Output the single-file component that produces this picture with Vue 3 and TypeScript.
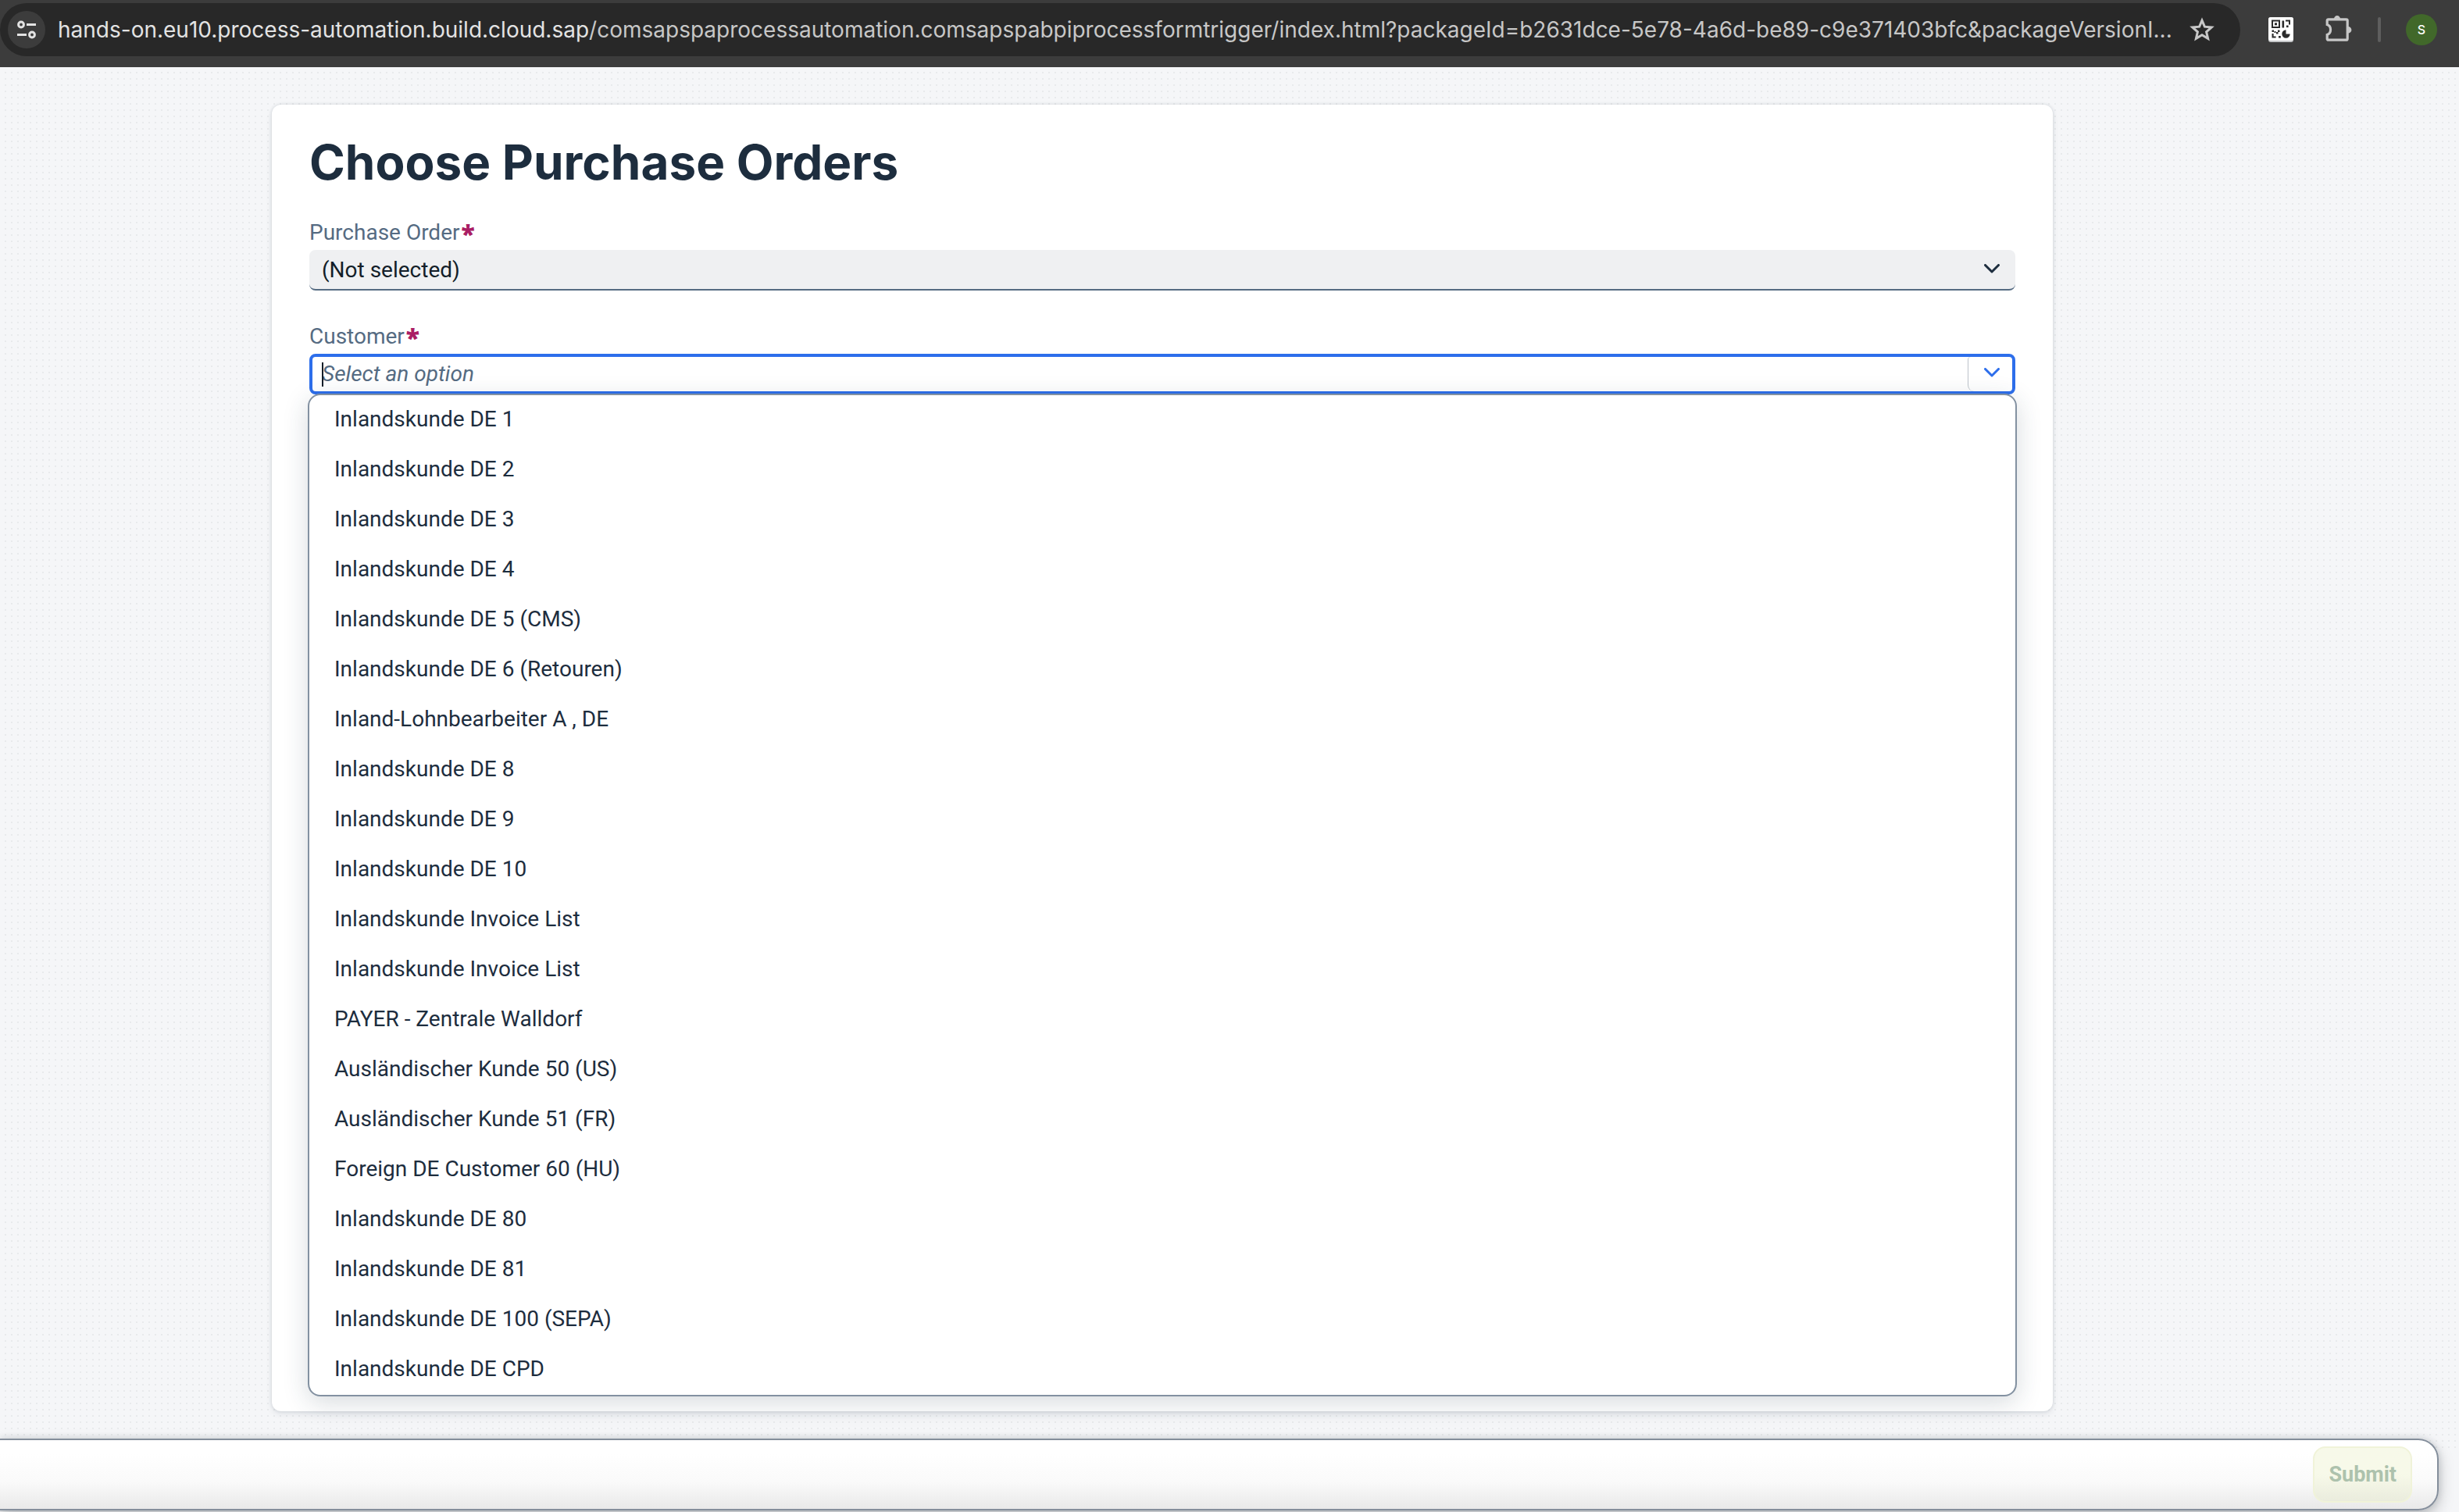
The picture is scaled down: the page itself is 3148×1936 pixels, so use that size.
<script setup lang="ts">
import { ref } from 'vue'

const host = 'hands-on.eu10.process-automation.build.cloud.sap'
const path =
  '/comsapspaprocessautomation.comsapspabpiprocessformtrigger/index.html?packageId=b2631dce-5e78-4a6d-be89-c9e371403bfc&packageVersionI...'

const customers: string[] = [
  'Inlandskunde DE 1',
  'Inlandskunde DE 2',
  'Inlandskunde DE 3',
  'Inlandskunde DE 4',
  'Inlandskunde DE 5 (CMS)',
  'Inlandskunde DE 6 (Retouren)',
  'Inland-Lohnbearbeiter A , DE',
  'Inlandskunde DE 8',
  'Inlandskunde DE 9',
  'Inlandskunde DE 10',
  'Inlandskunde Invoice List',
  'Inlandskunde Invoice List',
  'PAYER - Zentrale Walldorf',
  'Ausländischer Kunde 50 (US)',
  'Ausländischer Kunde 51 (FR)',
  'Foreign DE Customer 60 (HU)',
  'Inlandskunde DE 80',
  'Inlandskunde DE 81',
  'Inlandskunde DE 100 (SEPA)',
  'Inlandskunde DE CPD',
]

const order = ref('')
const customer = ref('')
</script>

<template>
  <div class="page">
    <header class="toolbar">
      <div class="omnibox">
        <button class="site-info" type="button" aria-label="View site information">
          <svg width="24" height="24" viewBox="0 0 24 24" fill="none" stroke="#e3e3e3" stroke-width="3">
            <circle cx="5" cy="5.5" r="3.4" />
            <path d="M12 5.5H24M0 18.5H12" />
            <circle cx="19" cy="18.5" r="3.4" />
          </svg>
        </button>
        <div class="url"><span class="host">{{ host }}</span>{{ path }}</div>
        <button class="icon-btn star" type="button" aria-label="Bookmark this tab">
          <svg width="34" height="32" viewBox="0 0 34 32" fill="none" stroke="#c7c7c7" stroke-width="3">
            <path d="M17 4.2L20.4 12.2L29.2 13L22.6 18.8L24.6 27.4L17 22.8L9.4 27.4L11.4 18.8L4.8 13L13.6 12.2Z" />
          </svg>
        </button>
      </div>
      <div class="extensions">
        <button class="icon-btn" type="button" aria-label="QR code extension">
          <svg width="32" height="32" viewBox="0 0 32 32">
            <rect width="32" height="32" rx="3" fill="#c4c6c8" />
            <rect width="32" height="30" rx="3" fill="#fff" />
            <g fill="#2b2b2b">
              <path fill-rule="evenodd" d="M4 3.5H15V14H4ZM6 5.5V12H13V5.5Z" />
              <rect x="8" y="7.3" width="3" height="3" />
              <rect x="17.5" y="4.5" width="2.6" height="9" />
              <path d="M22 3.5H28V9.5H26V5.5H22Z" />
              <rect x="23" y="10.5" width="2.6" height="2.6" />
              <rect x="4.5" y="16.5" width="2.5" height="2.5" />
              <rect x="10" y="19" width="2.5" height="2.5" />
              <rect x="12" y="16.5" width="2.5" height="2.5" />
              <rect x="7.5" y="18" width="2" height="2" />
              <path d="M4.5 21H6.6V24.6H9.6V26.6H4.5Z" />
              <rect x="13" y="24" width="2.8" height="2.6" />
              <path d="M22.5 16.3V21.5H27.7A5.2 5.2 0 1 1 22.5 16.3Z" />
            </g>
          </svg>
        </button>
        <button class="icon-btn" type="button" aria-label="Extensions">
          <svg width="36" height="36" viewBox="0 0 36 36">
            <path
              d="M3.2 6.3A1.5 1.5 0 0 1 4.7 4.8H27.7A1.5 1.5 0 0 1 29.2 6.3V29.7A1.5 1.5 0 0 1 27.7 31.2H4.7A1.5 1.5 0 0 1 3.2 29.7V24.4C9 22.5 9 13.5 3.2 11.6Z"
              fill="none" stroke="#c7c7c7" stroke-width="3.2"
            />
            <path d="M11.8 4.5A4.2 4.4 0 0 1 20.2 4.5ZM30 14A4.4 4.3 0 0 1 30 22.6Z" fill="#c7c7c7" />
          </svg>
        </button>
        <span class="separator"></span>
        <button class="avatar" type="button" aria-label="Profile">S</button>
      </div>
    </header>

    <main class="canvas">
      <form id="order-form" class="card" @submit.prevent>
        <h1>Choose Purchase Orders</h1>

        <div class="field">
          <label for="order">Purchase Order<span class="required">*</span></label>
          <div class="control">
            <select id="order" v-model="order">
              <option value="">(Not selected)</option>
            </select>
            <svg class="chevron" width="20" height="12" viewBox="0 0 20 12">
              <path d="M1.5 1.5L10 10L18.5 1.5" />
            </svg>
          </div>
        </div>

        <div class="field">
          <label for="customer">Customer<span class="required">*</span></label>
          <div class="combobox">
            <input
              id="customer" v-model="customer" type="text" role="combobox" aria-expanded="true"
              aria-controls="customer-list" placeholder="Select an option"
            />
            <span class="caret"></span>
            <button class="arrow" type="button" aria-label="Show options">
              <svg width="20" height="12" viewBox="0 0 20 12">
                <path d="M1.5 1.5L10 10L18.5 1.5" />
              </svg>
            </button>
            <ul id="customer-list" class="popover" role="listbox">
              <li v-for="(name, i) in customers" :key="i" role="option" @click="customer = name">{{ name }}</li>
            </ul>
          </div>
        </div>
      </form>
    </main>

    <footer class="actions">
      <div class="bar">
        <button class="submit" type="submit" form="order-form" disabled>Submit</button>
      </div>
    </footer>
  </div>
</template>

<style>
body {
  background: #f5f6f8;
}
</style>

<style scoped>
* {
  box-sizing: border-box;
}

.page {
  display: flex;
  flex-direction: column;
  min-height: 100vh;
  overflow: hidden;
  font-family: Roboto, sans-serif;
  font-size: 28px;
  color: #1d2d3e;
}

button {
  padding: 0;
  border: 0;
  background: none;
  font-family: inherit;
}

svg {
  display: block;
}

/* Browser toolbar */
.toolbar {
  display: flex;
  align-items: flex-start;
  gap: 36px;
  height: 86px;
  padding: 4px 28px 0 0;
  background: #3c3c3c;
  font-family: Inter, sans-serif;
}

.omnibox {
  display: flex;
  flex: 1;
  align-items: center;
  min-width: 0;
  height: 68px;
  padding: 0 32px 0 10px;
  border-radius: 34px;
  background: #282828;
}

.site-info {
  display: grid;
  flex: none;
  place-items: center;
  width: 48px;
  height: 48px;
  margin-right: 16px;
  border-radius: 50%;
  background: #3c3c3c;
}

.url {
  flex: 1;
  overflow: hidden;
  color: #c7c7c7;
  line-height: 40px;
  white-space: nowrap;
}

.host {
  color: #e3e3e3;
}

.star {
  margin-left: 16px;
}

.extensions {
  display: flex;
  align-items: center;
  gap: 32px;
  height: 68px;
}

.extensions .icon-btn + .icon-btn {
  margin-left: 8px;
}

.separator {
  width: 4px;
  height: 32px;
  border-radius: 2px;
  background: #5e5e5e;
}

.avatar {
  width: 40px;
  height: 40px;
  border-radius: 50%;
  background: #41682a;
  color: #fff;
  font-size: 16px;
  font-weight: 500;
  line-height: 40px;
}

/* Form canvas */
.canvas {
  display: flex;
  flex: 1;
  padding: 48px 520px 47px 348px;
  background: conic-gradient(from 270deg at 2px 2px, #e8eaec 90deg, transparent 0) 6px 6px / 8px 8px;
}

.card {
  flex: 1;
  padding: 38px 48px;
  border-radius: 12px;
  background: #fff;
  box-shadow: 0 0 4px rgba(34, 53, 72, 0.16), 0 4px 8px rgba(34, 53, 72, 0.08);
}

h1 {
  margin: 0 0 36px;
  font-family: Inter, sans-serif;
  font-size: 62px;
  font-weight: 700;
  line-height: 72px;
}

.field {
  margin-bottom: 41px;
}

label {
  display: block;
  height: 36px;
  margin-bottom: 4px;
  color: #556b82;
  line-height: 36px;
}

.required {
  margin-left: 2px;
  color: #aa1d64;
  font-family: "Open Sans", sans-serif;
  font-size: 32px;
  font-weight: 800;
  line-height: 0;
  vertical-align: -4px;
}

.control,
.combobox {
  position: relative;
  height: 52px;
}

select,
input {
  width: 100%;
  height: 100%;
  margin: 0;
  padding: 0 16px;
  border: 0;
  outline: 0;
  border-radius: 8px;
  appearance: none;
  background: #eff0f2;
  color: #131e29;
  font: inherit;
}

select {
  border-bottom: 2px solid #556b82;
}

.chevron {
  position: absolute;
  top: 18px;
  right: 20px;
  pointer-events: none;
}

.chevron path,
.arrow path {
  fill: none;
  stroke: #1d2d3e;
  stroke-width: 3;
  stroke-linecap: round;
  stroke-linejoin: round;
}

.combobox {
  display: flex;
  border: 4px solid #2d6eeb;
  border-radius: 8px;
  background: #fff;
}

.combobox input {
  flex: 1;
  min-width: 0;
  padding: 0 12px 2px;
  background: none;
}

.combobox input::placeholder {
  color: #556b82;
  font-style: italic;
  opacity: 1;
}

.caret {
  position: absolute;
  top: 7px;
  left: 12px;
  width: 2px;
  height: 31px;
  background: #131e29;
}

.arrow {
  display: grid;
  flex: none;
  place-items: center;
  width: 57px;
  padding-bottom: 4px;
  padding-left: 4px;
  border-left: 1px solid #bcc3ca;
  border-radius: 4px 4px 4px 8px;
}

.arrow path {
  stroke: #2d6eeb;
}

.popover {
  position: absolute;
  z-index: 1;
  top: 47px;
  right: -6px;
  left: -6px;
  margin: 0;
  padding: 0 0 4px;
  border: 2px solid #8391a1;
  border-radius: 16px;
  background: #fff;
  box-shadow: 0 8px 32px rgba(34, 53, 72, 0.18);
  list-style: none;
}

.popover li {
  height: 64px;
  padding: 0 32px;
  line-height: 62px;
}

.popover li:last-child {
  height: 60px;
}

/* Footer */
.actions {
  position: relative;
  margin-top: -12px;
  padding: 0 26px 2px 0;
}

.bar {
  display: flex;
  align-items: center;
  justify-content: flex-end;
  height: 92px;
  padding-right: 32px;
  border: 2px solid #848e9b;
  border-left: 0;
  border-radius: 0 26px 26px 0;
  background: linear-gradient(#fff 20%, #fafafa 60%, #e9e9e9);
  box-shadow: 0 0 8px rgba(34, 53, 72, 0.16), 0 8px 20px rgba(0, 0, 0, 0.22);
}

.submit {
  height: 72px;
  padding: 0 18px;
  border: 2px solid #f0f3d9;
  border-radius: 16px;
  background: linear-gradient(#f7f9e9 50%, #eaecdd);
  color: #adc2ad;
  font-size: 27px;
  font-weight: 700;
}
</style>
